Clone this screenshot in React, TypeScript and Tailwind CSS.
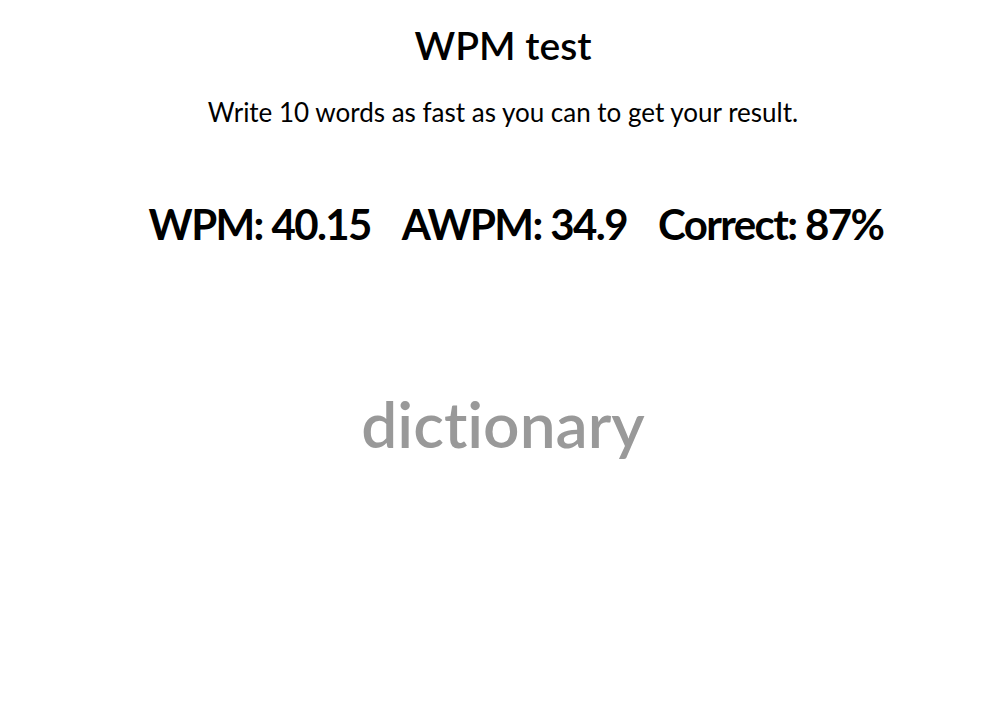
export default function App() {
  return (
    <div className="min-h-screen bg-white text-black flex flex-col items-center [font-variant-ligatures:none]" style={{ fontFamily: "Lato, sans-serif" }}>
      <h1 className="mt-[20px] text-[39px] font-semibold leading-[50px]">WPM test</h1>
      <p className="mt-[25px] text-[26px] leading-[34px]">Write 10 words as fast as you can to get your result.</p>
      <div className="mt-[68px] pl-[26px] flex gap-[31px] text-[42px] font-bold tracking-[-1.6px] leading-[54px]">
        <span>WPM: 40.15</span>
        <span>AWPM: 34.9</span>
        <span>Correct: 87%</span>
      </div>
      <div className="mt-[133px] text-[64px] font-semibold leading-[80px] text-[#999999]">dictionary</div>
    </div>
  );
}
